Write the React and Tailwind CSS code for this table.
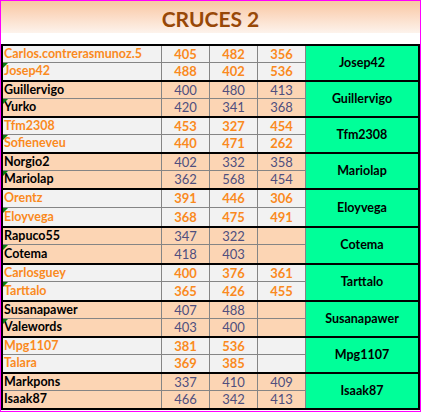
import React from "react";

const groups = [
  { o: true, rows: [["Carlos.contrerasmunoz.5", "405", "482", "356", false], ["Josep42", "488", "402", "536", true]], w: "Josep42", h: 34 },
  { o: false, rows: [["Guillervigo", "400", "480", "413", false], ["Yurko", "420", "341", "368", true]], w: "Guillervigo", h: 34 },
  { o: true, rows: [["Tfm2308", "453", "327", "454", false], ["Sofieneveu", "440", "471", "262", true]], w: "Tfm2308", h: 34 },
  { o: false, rows: [["Norgio2", "402", "332", "358", false], ["Mariolap", "362", "568", "454", true]], w: "Mariolap", h: 34 },
  { o: true, rows: [["Orentz", "391", "446", "306", false], ["Eloyvega", "368", "475", "491", true]], w: "Eloyvega", h: 36 },
  { o: false, rows: [["Rapuco55", "347", "322", "", false], ["Cotema", "418", "403", "", true]], w: "Cotema", h: 35 },
  { o: true, rows: [["Carlosguey", "400", "376", "361", false], ["Tarttalo", "365", "426", "455", true]], w: "Tarttalo", h: 35 },
  { o: false, rows: [["Susanapawer", "407", "488", "", false], ["Valewords", "403", "400", "", true]], w: "Susanapawer", h: 34 },
  { o: true, rows: [["Mpg1107", "381", "536", "", false], ["Talara", "369", "385", "", false]], w: "Mpg1107", h: 34 },
  { o: false, rows: [["Markpons", "337", "410", "409", false], ["Isaak87", "466", "342", "413", false]], w: "Isaak87", h: 34 },
];

function Group({ g, first }) {
  const bg = g.o ? "bg-[#f2f2f2]" : "bg-[#fcd5b4]";
  const nameColor = g.o ? "text-[#fa8a1e]" : "text-black";
  const numCls = g.o ? "text-[#fa8a1e] font-bold" : "text-[#4f4f7e]";
  const top = Math.floor(g.h / 2);
  return (
    <div
      className={`flex ${first ? "" : "border-t-2 border-black"}`}
      style={{ height: g.h + (first ? 0 : 2) }}
    >
      <div className={`flex flex-col w-[303px] ${bg}`}>
        {g.rows.map((r, i) => (
          <div
            key={i}
            className={`flex ${i === 0 ? "border-b border-[#858585]" : "flex-1"}`}
            style={i === 0 ? { height: top } : undefined}
          >
            <div className={`relative w-[159px] border-r border-[#858585] pl-[1px] flex items-center font-bold text-[12.5px] ${nameColor}`}>
              {r[4] && (
                <div className="absolute left-0 top-0 w-0 h-0 border-t-[5px] border-t-[#0b7a12] border-r-[5px] border-r-transparent" />
              )}
              <span className="leading-none">{r[0]}</span>
            </div>
            {[r[1], r[2], r[3]].map((n, j) => (
              <div key={j} className={`w-[48px] border-r border-[#858585] flex items-center justify-center text-[13px] ${numCls}`}>
                <span className="leading-none">{n}</span>
              </div>
            ))}
          </div>
        ))}
      </div>
      <div className="flex-1 bg-[#00ff99] flex items-center justify-center font-bold text-black text-[12.5px]">
        <span className="leading-none">{g.w}</span>
      </div>
    </div>
  );
}

export default function App() {
  return (
    <div
      className="w-[421px] h-[412px] border border-[#ff00ff] bg-white overflow-hidden"
      style={{ fontFamily: "Lato, 'Open Sans', sans-serif" }}
    >
      <div className="h-[32px] bg-gradient-to-b from-[#f8c6a2] to-[#fdf3ec] flex items-center justify-center">
        <span className="text-[21px] font-bold text-[#984807] leading-none mt-[2px]">CRUCES 2</span>
      </div>
      <div className="h-[11px]" />
      <div className="border-2 border-black">
        {groups.map((g, i) => (
          <Group key={i} g={g} first={i === 0} />
        ))}
      </div>
    </div>
  );
}
